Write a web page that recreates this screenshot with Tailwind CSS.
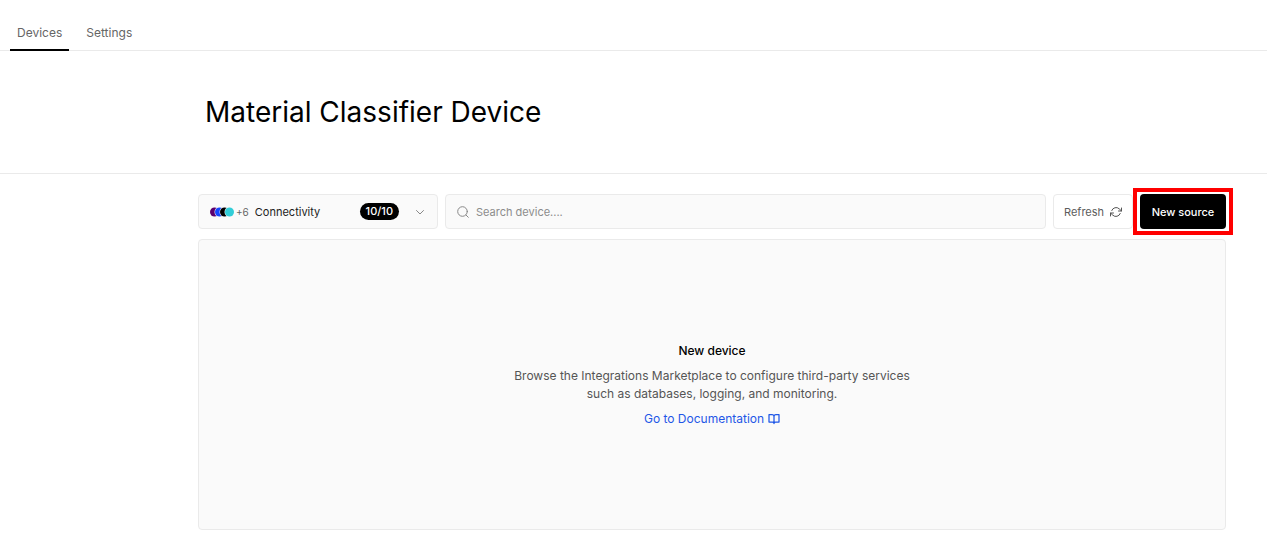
<!DOCTYPE html>
<html lang="en">
<head>
<meta charset="utf-8">
<meta name="viewport" content="width=device-width, initial-scale=1">
<title>Material Classifier Device</title>
<script src="https://cdn.jsdelivr.net/npm/@tailwindcss/browser@4"></script>
</head>
<body class="bg-white font-['Inter',sans-serif] text-xs leading-[18px] text-neutral-600">
<nav class="flex border-b border-[#eaeaea] px-[10px] pt-[14px]">
  <a href="#" aria-current="page" class="-mb-px h-[37px] border-b-2 border-black px-[7px] pt-[10px] text-[#666]">Devices</a>
  <a href="#" class="ml-[10px] h-9 px-[7px] pt-[10px] text-[#666]">Settings</a>
</nav>
<header class="border-b border-[#eaeaea] pt-[43px] pb-[43px] pl-[205px]">
  <h1 class="text-[28px] leading-9 text-black">Material Classifier Device</h1>
</header>
<main class="pt-5 pr-[41px] pl-[198px]">
  <div class="flex h-[35px] gap-[7px]">
    <button type="button" class="flex w-[240px] shrink-0 items-center rounded border border-[#eaeaea] bg-[#fafafa] px-3 pl-[10px] text-[11px] text-[#222]">
      <svg class="h-[10px] w-[26px]" viewBox="0 0 26 10" aria-hidden="true">
        <circle cx="5.500" cy="5" r="4.500" fill="#5b006e"/>
        <circle cx="10.500" cy="5" r="5" fill="#fafafa"/>
        <circle cx="10.500" cy="5" r="4.500" fill="#1546ff"/>
        <circle cx="15.500" cy="5" r="5" fill="#fafafa"/>
        <circle cx="15.500" cy="5" r="4.500" fill="#000"/>
        <circle cx="20.500" cy="5" r="5" fill="#fafafa"/>
        <circle cx="20.500" cy="5" r="4.500" fill="#32cdd7"/>
      </svg>
      <span class="ml-px text-[10px] text-[#666]">+6</span>
      <span class="ml-[6px]">Connectivity</span>
      <span class="ml-auto rounded-full bg-black px-[6px] leading-[17px] font-medium text-white">10/10</span>
      <svg class="ml-4 size-[10px]" viewBox="0 0 10 10" fill="none" stroke="#888" stroke-linecap="round" stroke-linejoin="round" aria-hidden="true"><path d="M1.500 3.500 5 7l3.500-3.500"/></svg>
    </button>
    <label class="flex min-w-0 flex-1 items-center gap-[7px] rounded border border-[#eaeaea] bg-[#fafafa] px-[11px]">
      <svg class="size-[12px] shrink-0" viewBox="0 0 12 12" fill="none" stroke="#888" stroke-linecap="round" aria-hidden="true"><circle cx="5.500" cy="5.500" r="4.800"/><path d="m9 9 2.300 2.300"/></svg>
      <input type="text" aria-label="Search device" placeholder="Search device...." class="min-w-0 flex-1 bg-transparent text-[11px] text-[#333] outline-none placeholder:text-[#8c8c8c]">
    </label>
    <button type="button" class="flex w-[80px] shrink-0 items-center gap-[6px] rounded border border-[#eaeaea] bg-white pl-[10px] text-[11px] text-[#5c5c5c]">
      Refresh
      <svg class="size-[12px] shrink-0" viewBox="0 0 24 24" fill="none" stroke="#555" stroke-width="2" stroke-linecap="round" stroke-linejoin="round" aria-hidden="true"><path d="M23 4v6h-6M1 20v-6h6"/><path d="M3.510 9a9 9 0 0 1 14.850-3.360L23 10M1 14l4.640 4.360A9 9 0 0 0 20.490 15"/></svg>
    </button>
    <div class="relative w-[86px] shrink-0">
      <button type="button" class="size-full rounded bg-black text-[11px] font-medium text-white">New source</button>
      <span class="pointer-events-none absolute -inset-x-[7px] -inset-y-[6px] border-4 border-[#ff0000]"></span>
    </div>
  </div>
  <section class="mt-[10px] flex min-h-[291px] flex-col items-center justify-center gap-[7px] rounded border border-[#eaeaea] bg-[#fafafa] p-4 text-center">
    <h2 class="font-medium text-black">New device</h2>
    <p class="max-w-[410px] text-[#555]">Browse the Integrations Marketplace to configure third-party services such as databases, logging, and monitoring.</p>
    <a href="#" class="flex items-center gap-1 text-[#1f57e7]">Go to Documentation
      <svg class="size-[12px]" viewBox="0 0 24 24" fill="none" stroke="currentColor" stroke-width="2.500" stroke-linecap="round" stroke-linejoin="round" aria-hidden="true"><path d="M2 3h6a4 4 0 0 1 4 4v14a3 3 0 0 0-3-3H2zM22 3h-6a4 4 0 0 0-4 4v14a3 3 0 0 1 3-3h7z"/></svg>
    </a>
  </section>
</main>
</body>
</html>
